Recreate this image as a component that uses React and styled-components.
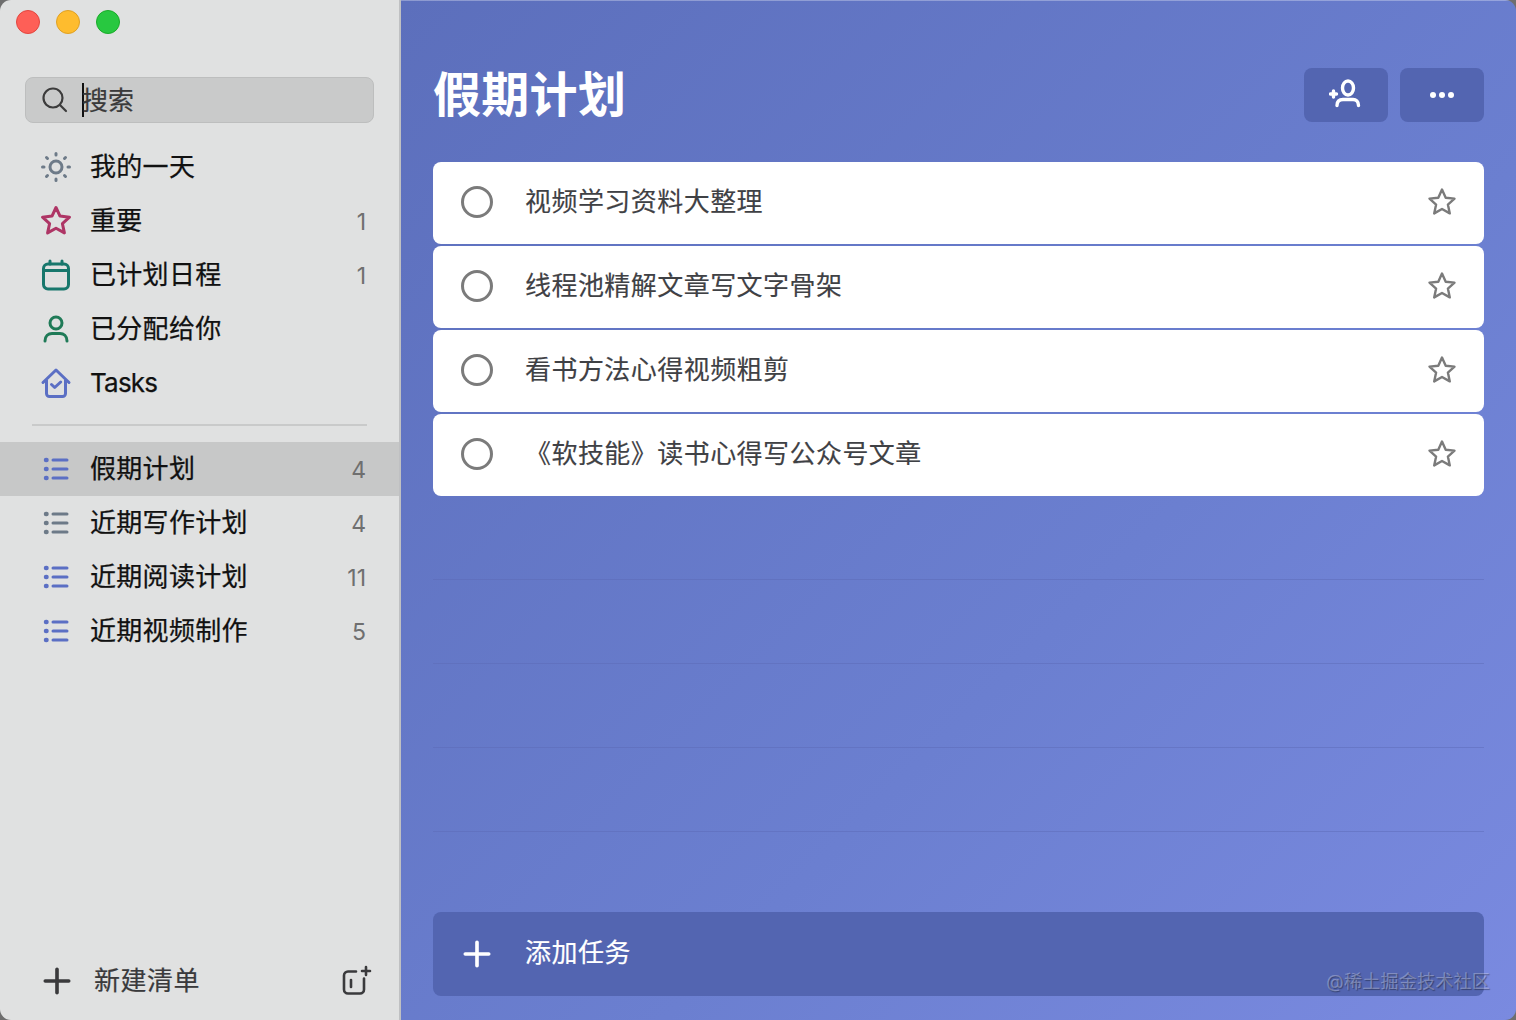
import React from "react";
import styled, { createGlobalStyle } from "styled-components";

const Global = createGlobalStyle`
  html, body { margin: 0; padding: 0; height: 1020px; overflow: hidden; background: #6e6e6e; }
  * { box-sizing: border-box; }
  #root { height: 1020px; }
`;

const FONT = `Inter, "Noto Sans CJK SC", "Noto Sans", sans-serif`;

const Window = styled.div`
  position: relative;
  display: flex;
  width: 1516px;
  height: 1020px;
  border-radius: 11px;
  overflow: hidden;
  font-family: ${FONT};
`;

const Sidebar = styled.aside`
  display: flex;
  flex-direction: column;
  flex: 0 0 401px;
  height: 100%;
  background: #e0e1e1;
  border-right: 2px solid #bfc0c2;
  color: #1b1b1b;
`;

const TitleBar = styled.div`
  display: flex;
  gap: 16px;
  height: 77px;
  padding: 10px 0 0 16px;
`;

const Light = styled.span`
  width: 24px;
  height: 24px;
  border-radius: 50%;
  background: ${p => p.$c};
  border: 1px solid ${p => p.$b};
`;

const SearchBox = styled.div`
  display: flex;
  align-items: center;
  height: 46px;
  margin: 0 25px 0 25px;
  padding-left: 15px;
  background: #c9caca;
  border: 1px solid #bdbebe;
  border-radius: 8px;
`;

const Caret = styled.span`
  width: 2px;
  height: 34px;
  margin-left: 13px;
  background: #111;
`;

const SearchText = styled.span`
  margin-left: -2px;
  margin-top: 2px;
  font-size: 26px;
  line-height: 34px;
  -webkit-text-stroke: 0.2px #3a3a3a;
  color: #3a3a3a;
`;

const Group = styled.div`
  display: flex;
  flex-direction: column;
`;

const NavGroup = styled(Group)`
  margin-top: 17px;
`;

const NavRow = styled.div`
  display: flex;
  align-items: center;
  height: 54px;
  padding: 0 33px 0 40px;
  background: ${p => (p.$active ? "#c7c8c8" : "transparent")};
`;

const IconSlot = styled.span`
  display: flex;
  align-items: center;
  justify-content: center;
  flex: 0 0 32px;
  width: 32px;
  height: 32px;
`;

const Label = styled.span`
  flex: 1;
  margin: 0 0 0 18px;
  font-size: 26px;
  line-height: 34px;
  letter-spacing: ${p => (p.$latin ? "-0.8px" : "0.3px")};
  -webkit-text-stroke: 0.25px #111;
  color: #111;
`;

const Count = styled.span`
  margin-top: 1px;
  font-size: 23px;
  color: #6f6f6f;
`;

const Divider = styled.div`
  height: 2px;
  margin: 14px 32px 16px 32px;
  background: #c9caca;
`;

const Spacer = styled.div`
  flex: 1;
`;

const Footer = styled.div`
  display: flex;
  align-items: center;
  height: 54px;
  margin-bottom: 12px;
  padding: 0 27px 0 41px;
`;

const FooterLabel = styled.span`
  flex: 1;
  margin: 0 0 0 21px;
  font-size: 26px;
  line-height: 34px;
  letter-spacing: 0.5px;
  -webkit-text-stroke: 0.2px #3a3a3c;
  color: #3a3a3c;
`;

const Main = styled.main`
  display: flex;
  flex-direction: column;
  flex: 1;
  min-width: 0;
  height: 100%;
  padding: 0 32px 24px 32px;
  background: linear-gradient(135deg, #5c6fbc 0%, #6b7fd0 60%, #7a8ae0 100%);
  box-shadow: inset 0 1px 0 rgba(255, 255, 255, 0.3);
`;

const Header = styled.header`
  display: flex;
  align-items: flex-start;
  justify-content: space-between;
  height: 162px;
  padding-top: 61px;
`;

const Title = styled.h1`
  margin: 0;
  font-size: 48px;
  line-height: 68px;
  font-weight: 700;
  letter-spacing: 0.3px;
  color: #fff;
`;

const HeaderActions = styled.div`
  display: flex;
  gap: 12px;
  margin-top: 7px;
`;

const HeaderButton = styled.button`
  display: flex;
  align-items: center;
  justify-content: center;
  width: 84px;
  height: 54px;
  padding: 0;
  border: none;
  border-radius: 8px;
  background: #5365b1;
`;

const TaskList = styled.div`
  display: flex;
  flex-direction: column;
  gap: 2px;
`;

const Task = styled.div`
  display: flex;
  align-items: center;
  height: 82px;
  padding: 0 26px 2px 28px;
  background: #fff;
  border-radius: 8px;
`;

const Circle = styled.span`
  flex: 0 0 32px;
  width: 32px;
  height: 32px;
  border: 3px solid #7b7b7b;
  border-radius: 50%;
`;

const TaskText = styled.span`
  flex: 1;
  margin-left: 32px;
  font-size: 26px;
  line-height: 34px;
  letter-spacing: 0.45px;
  -webkit-text-stroke: 0.15px #3f4145;
  color: #3f4145;
`;

const EmptyLines = styled.div`
  display: flex;
  flex-direction: column;
  flex: 1;
`;

const EmptyLine = styled.div`
  flex: 0 0 84px;
  height: 84px;
  border-bottom: 1px solid rgba(90, 105, 180, 0.45);
`;

const AddBar = styled.div`
  display: flex;
  align-items: center;
  height: 84px;
  padding-left: 28px;
  background: #5365b1;
  border-radius: 8px;
  color: #fff;
`;

const AddText = styled.span`
  margin-left: 32px;
  margin-top: -2px;
  font-size: 26px;
  line-height: 34px;
  letter-spacing: 0.5px;
  -webkit-text-stroke: 0.2px #fff;
  color: #fff;
`;

const Watermark = styled.div`
  position: absolute;
  right: 26px;
  bottom: 26px;
  font-size: 18px;
  line-height: 24px;
  letter-spacing: 0.25px;
  color: rgba(255, 255, 255, 0.3);
  text-shadow: 1px 1px 1px rgba(0, 0, 0, 0.35);
`;

const Svg = ({ size = 32, children, stroke = "currentColor", sw = 2.6, vb }) => (
  <svg width={size} height={size} viewBox={vb || "0 0 32 32"} fill="none" stroke={stroke} strokeWidth={sw} strokeLinecap="round" strokeLinejoin="round">
    {children}
  </svg>
);

const SearchIcon = () => (
  <Svg size={28} vb="0 0 28 28" stroke="#3c3c3c" sw={2.2}>
    <circle cx="12" cy="12" r="9.500" />
    <path d="M19 19l6 6" />
  </Svg>
);

const SunIcon = () => (
  <Svg stroke="#6d7a88" sw={3}>
    <circle cx="16" cy="16" r="6" />
    <path d="M16 2.500v1.500M16 28v1.500M2.500 16H4M28 16h1.500M6.500 6.500l1 1M24.500 24.500l1 1M6.500 25.500l1-1M24.500 7.500l1-1" />
  </Svg>
);

const TaskStarPath = "M16 3.500l3.700 8.200 8.800 .9-6.600 6 1.900 8.800L16 23l-7.800 4.400 1.900-8.800-6.600-6 8.800-.9z";
const NavStarPath = "M16 2.500l4 8.600 9.500 1.100-7.100 6.400 2 9.300L16 23.200l-8.400 4.700 2-9.300-7.100-6.400 9.500-1.100z";

const StarIcon = ({ color = "#ae3565", sw = 3, path = NavStarPath }) => (
  <Svg stroke={color} sw={sw}>
    <path d={path} />
  </Svg>
);

const CalendarIcon = () => (
  <Svg stroke="#17776c" sw={3}>
    <rect x="3.500" y="5" width="25" height="25" rx="4.500" />
    <path d="M3.500 11.500h25M10 2v3M22 2v3" />
  </Svg>
);

const PersonIcon = ({ color = "#1f7a57", sw = 3 }) => (
  <Svg stroke={color} sw={sw}>
    <circle cx="16" cy="10" r="6" />
    <path d="M5 28c0-5 3.500-7.500 7-7.500h8c3.500 0 7 2.500 7 7.500" />
  </Svg>
);

const HomeIcon = () => (
  <Svg stroke="#5b6fc4" sw={3}>
    <path d="M3 15.500L16 3l13 12.500M6.500 13v13.500a3 3 0 0 0 3 3h13a3 3 0 0 0 3-3V13" />
    <path d="M11.500 17.500l3.200 3 6-5.500" />
  </Svg>
);

const ListIcon = ({ color }) => (
  <Svg stroke={color} sw={3}>
    <path d="M13 7h14M13 16h14M13 25h14" />
    <path d="M6 7h.5M6 16h.5M6 25h.5" strokeWidth="4.500" />
  </Svg>
);

const PlusIcon = ({ color, size = 30, sw = 3.400 }) => (
  <Svg size={size} vb="0 0 30 30" stroke={color} sw={sw}>
    <path d="M15 4v22M4 15h22" />
  </Svg>
);

const NewGroupIcon = () => (
  <Svg stroke="#3a3a3c" sw={2.600}>
    <path d="M16 6.500H8a4 4 0 0 0-4 4v14a4 4 0 0 0 4 4h12a4 4 0 0 0 4-4v-11" />
    <path d="M11 15v7" />
    <path d="M26 2v8M22 6h8" />
  </Svg>
);

const AddPersonIcon = () => (
  <Svg stroke="#fff" sw={3.400} size={34} vb="0 0 34 34">
    <ellipse cx="19" cy="10" rx="5.500" ry="7" />
    <path d="M8 27.500c0-4 2.500-6 6-6h10c3 0 5.500 2 5.500 6" />
    <path d="M1.500 16h6M4.500 13v6" />
  </Svg>
);

const DotsIcon = () => (
  <svg width="26" height="8" viewBox="0 0 26 8" fill="#fff">
    <circle cx="4" cy="4" r="3" />
    <circle cx="13" cy="4" r="3" />
    <circle cx="22" cy="4" r="3" />
  </svg>
);

const nav = [
  { icon: <SunIcon />, label: "我的一天" },
  { icon: <StarIcon />, label: "重要", count: 1 },
  { icon: <CalendarIcon />, label: "已计划日程", count: 1 },
  { icon: <PersonIcon />, label: "已分配给你" },
  { icon: <HomeIcon />, label: "Tasks", latin: true },
];

const lists = [
  { label: "假期计划", count: 4, color: "#5b6fc4", active: true },
  { label: "近期写作计划", count: 4, color: "#6d7a88" },
  { label: "近期阅读计划", count: 11, color: "#5b6fc4" },
  { label: "近期视频制作", count: 5, color: "#5b6fc4" },
];

const tasks = ["视频学习资料大整理", "线程池精解文章写文字骨架", "看书方法心得视频粗剪", "《软技能》读书心得写公众号文章"];

export default function App() {
  return (
    <Window>
      <Global />
      <Sidebar>
        <TitleBar>
          <Light $c="#fe5f57" $b="#e2463f" />
          <Light $c="#febc2e" $b="#dfa023" />
          <Light $c="#28c840" $b="#1aab29" />
        </TitleBar>
        <SearchBox>
          <SearchIcon />
          <Caret />
          <SearchText>搜索</SearchText>
        </SearchBox>
        <NavGroup>
          {nav.map(n => (
            <NavRow key={n.label}>
              <IconSlot>{n.icon}</IconSlot>
              <Label $latin={n.latin}>{n.label}</Label>
              {n.count && <Count>{n.count}</Count>}
            </NavRow>
          ))}
        </NavGroup>
        <Divider />
        <Group>
          {lists.map(l => (
            <NavRow key={l.label} $active={l.active}>
              <IconSlot><ListIcon color={l.color} /></IconSlot>
              <Label>{l.label}</Label>
              <Count>{l.count}</Count>
            </NavRow>
          ))}
        </Group>
        <Spacer />
        <Footer>
          <PlusIcon color="#3a3a3c" size={32} />
          <FooterLabel>新建清单</FooterLabel>
          <NewGroupIcon />
        </Footer>
      </Sidebar>
      <Main>
        <Header>
          <Title>假期计划</Title>
          <HeaderActions>
            <HeaderButton aria-label="add person"><AddPersonIcon /></HeaderButton>
            <HeaderButton aria-label="more"><DotsIcon /></HeaderButton>
          </HeaderActions>
        </Header>
        <TaskList>
          {tasks.map(t => (
            <Task key={t}>
              <Circle />
              <TaskText>{t}</TaskText>
              <StarIcon color="#7b7b7b" sw={2.400} path={TaskStarPath} />
            </Task>
          ))}
        </TaskList>
        <EmptyLines>
          <EmptyLine />
          <EmptyLine />
          <EmptyLine />
          <EmptyLine />
        </EmptyLines>
        <AddBar>
          <PlusIcon color="#fff" size={32} />
          <AddText>添加任务</AddText>
        </AddBar>
      </Main>
      <Watermark>@稀土掘金技术社区</Watermark>
    </Window>
  );
}
